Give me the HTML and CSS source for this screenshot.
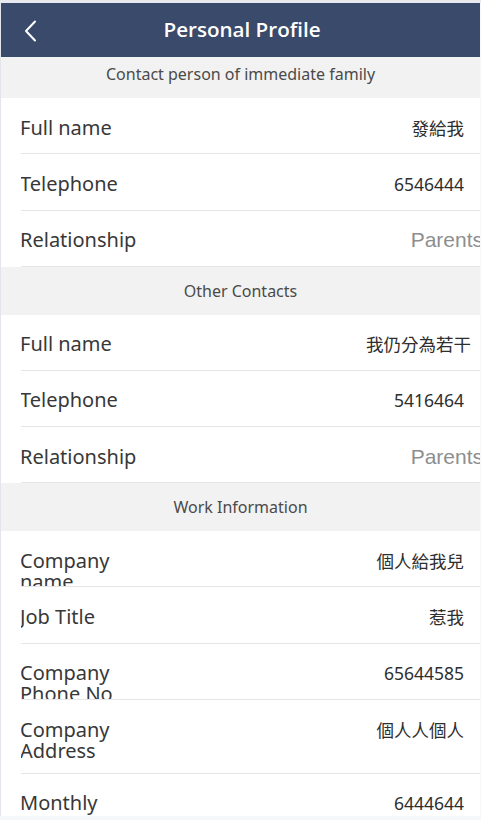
FILE: index.html
```html
<!DOCTYPE html>
<html lang="en">
<head>
<meta charset="utf-8">
<title>Personal Profile</title>
<link rel="stylesheet" href="styles.css">
</head>
<body>
<div class="page">
  <header class="topbar">
    <button class="back" aria-label="Back">
      <svg width="14" height="22" viewBox="0 0 14 22"><path d="M11 1.5 L2 11 L11 20.5" fill="none" stroke="#fff" stroke-width="2" stroke-linecap="round" stroke-linejoin="round"/></svg>
    </button>
    <h1 class="title">Personal Profile</h1>
    <span class="spacer"></span>
  </header>

  <div class="section-head first">Contact person of immediate family</div>
  <div class="group">
    <div class="row"><span class="label">Full name</span><span class="value">發給我</span></div>
    <div class="row"><span class="label">Telephone</span><span class="value">6546444</span></div>
    <div class="row"><span class="label">Relationship</span><span class="value placeholder">Parents</span></div>
  </div>

  <div class="section-head">Other Contacts</div>
  <div class="group">
    <div class="row"><span class="label">Full name</span><span class="value wide">我仍分為若干</span></div>
    <div class="row"><span class="label">Telephone</span><span class="value">5416464</span></div>
    <div class="row"><span class="label">Relationship</span><span class="value placeholder">Parents</span></div>
  </div>

  <div class="section-head">Work Information</div>
  <div class="group">
    <div class="row"><span class="label">Company name</span><span class="value">個人給我兒</span></div>
    <div class="row"><span class="label">Job Title</span><span class="value">惹我</span></div>
    <div class="row"><span class="label">Company Phone No</span><span class="value">65644585</span></div>
    <div class="row auto"><span class="label">Company Address</span><span class="value">個人人個人</span></div>
    <div class="row"><span class="label">Monthly</span><span class="value">6444644</span></div>
  </div>
</div>
</body>
</html>
```

FILE: styles.css
```css
html, body {
  margin: 0;
  padding: 0;
}
body {
  background: #f5f7fa;
  font-family: "Noto Sans", "Noto Sans CJK TC", sans-serif;
  overflow: hidden;
  height: 820px;
  border-top: 3px solid #e7e9ee;
  box-sizing: border-box;
}
.page {
  margin-left: 1px;
  width: 479px;
  height: 813px;
  overflow: hidden;
  background: #ffffff;
  box-shadow: -1px 0 0 #e3e5ea;
}
.topbar {
  height: 54px;
  background: #3a4a6b;
  display: flex;
  align-items: center;
}
.back {
  width: 56px;
  height: 54px;
  padding: 0 0 0 4px;
  border: 0;
  background: transparent;
  display: flex;
  align-items: center;
  justify-content: center;
}
.back svg {
  display: block;
  margin-top: 1px;
}
.title {
  flex: 1;
  margin: 0;
  text-align: center;
  color: #ffffff;
  font-family: "Open Sans", "Noto Sans", sans-serif;
  font-size: 20.6px;
  font-weight: 600;
  line-height: 52px;
  height: 54px;
  padding-left: 3px;
}
.spacer {
  width: 56px;
}
.section-head {
  height: 47.7px;
  line-height: 48px;
  background: #f2f2f2;
  color: #4a4a4a;
  font-size: 16px;
  text-align: center;
}
.section-head.first {
  height: 41px;
  line-height: 34px;
}
.group {
  background: #ffffff;
}
.row {
  margin-left: 20px;
  box-sizing: border-box;
  padding: 18.5px 16px 0 0;
  border-bottom: 1px solid #e6e6e6;
  display: flex;
  align-items: baseline;
  justify-content: space-between;
  overflow: hidden;
  height: 56.3px;
}
.row.auto {
  height: auto;
  padding-bottom: 12px;
}
.label {
  width: 125px;
  margin-left: -1px;
  font-size: 20px;
  line-height: 21px;
  color: #383838;
}
.value {
  font-size: 17.5px;
  line-height: 22px;
  color: #2e2e2e;
  text-align: right;
  white-space: nowrap;
}
.value.wide {
  margin-right: -7px;
}
.value.placeholder {
  font-family: "Liberation Sans", Arial, sans-serif;
  font-size: 21px;
  color: #8e8e8e;
  margin-right: -19px;
}
```
